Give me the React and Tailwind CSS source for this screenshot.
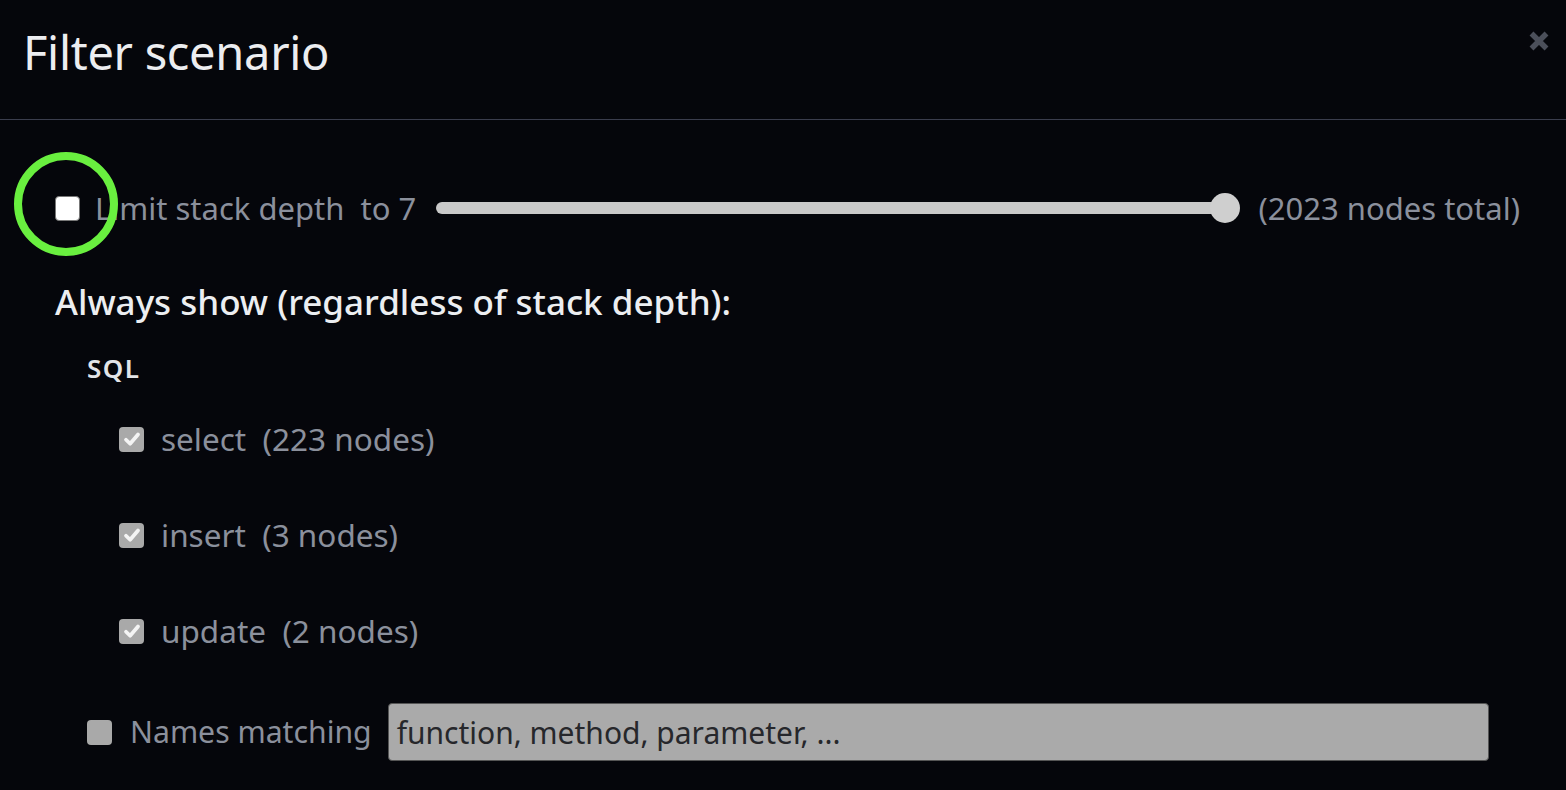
import React from "react";

function Check({ checked, className = "" }) {
  return (
    <span className={"flex items-center justify-center rounded-[4px] shrink-0 " + className}>
      {checked && (
        <svg width="20" height="20" viewBox="0 0 16 16">
          <path d="M3.2 8.6 L6.5 11.8 L12.8 4.4" fill="none" stroke="#f4f4f4" strokeWidth="3" strokeLinecap="round" strokeLinejoin="round" />
        </svg>
      )}
    </span>
  );
}

export default function App() {
  const font = { fontFamily: '"Noto Sans", "Open Sans", sans-serif' };
  return (
    <div className="w-[1566px] h-[790px] bg-[#05060b] overflow-hidden" style={font}>
      <div className="relative h-[120px] border-b border-[#3a3d4d] flex items-center pl-[23px]">
        <h1 className="text-[47px] leading-none text-[#ecedf0] tracking-[-0.3px] pb-[15px]">Filter scenario</h1>
        <svg className="absolute right-[16px] top-[30px]" width="22" height="22" viewBox="0 0 22 22">
          <path d="M3.5 3.5 L18.5 18.5 M18.5 3.5 L3.5 18.5" stroke="#4b4f5a" strokeWidth="5.5" strokeLinecap="butt" />
        </svg>
      </div>

      <div className="pl-[55px] pr-[46px]">
        <div className="relative flex items-center h-[60px] mt-[58px]">
          <span className="absolute left-[-41px] top-[-26px] w-[104px] h-[104px] rounded-full border-[8px] border-[#69ef3f]" />
          <span className="w-[25px] h-[25px] bg-white rounded-[4px] border border-[#777] shrink-0" />
          <span className="ml-[15px] text-[31px] text-[#8b909c] whitespace-pre">Limit stack depth  to 7</span>
          <div className="relative flex-1 ml-[20px] mr-[34px] h-[30px] flex items-center">
            <div className="w-full h-[12px] rounded-full bg-[#c9c9c9]" />
            <div className="absolute right-[-15px] w-[30px] h-[30px] rounded-full bg-[#cfcfcf]" />
          </div>
          <span className="text-[31px] text-[#8b909c]">(2023 nodes total)</span>
        </div>

        <div className="mt-[34px] text-[35px] font-medium text-[#eceef1] leading-[60px]">
          Always show (regardless of stack depth):
        </div>

        <div className="pl-[32px]">
          <div className="mt-[16px] text-[26px] font-semibold text-[#e2e4e8] tracking-[1.5px] leading-[40px]">SQL</div>

          <div className="pl-[32px] mt-[21px] flex flex-col gap-[36px]">
            {[
              ["select", "(223 nodes)"],
              ["insert", "(3 nodes)"],
              ["update", "(2 nodes)"],
            ].map(([a, b]) => (
              <div key={a} className="flex items-center h-[60px]">
                <Check checked className="w-[25px] h-[25px] bg-[#a9a9a9]" />
                <span className="ml-[17px] text-[31.5px] text-[#8b909c] whitespace-pre">{a + "  " + b}</span>
              </div>
            ))}
          </div>

          <div className="flex items-center mt-[42px]">
            <span className="w-[25px] h-[25px] bg-[#a9a9a9] rounded-[4px] shrink-0" />
            <span className="ml-[18px] text-[30.2px] text-[#8b909c]">Names matching</span>
            <div className="ml-[16px] flex-1 mr-[31px] h-[58px] bg-[#aaaaaa] rounded-[4px] border border-[#555] flex items-center pl-[8px] text-[30px] text-[#26272b]">
              function, method, parameter, ...
            </div>
          </div>
        </div>
      </div>
    </div>
  );
}
